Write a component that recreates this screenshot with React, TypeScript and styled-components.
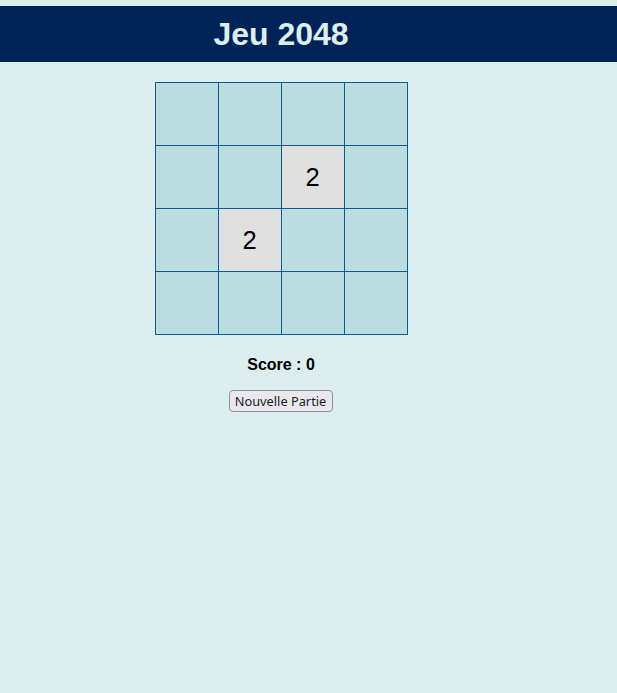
import React from "react";
import styled, { createGlobalStyle } from "styled-components";

const GlobalStyle = createGlobalStyle`
  html, body {
    margin: 0;
    padding: 0;
    background: #ddeeee;
  }
  body {
    font-family: "Liberation Sans", Arial, sans-serif;
    color: #000;
  }
`;

const Page = styled.div`
  min-height: 693px;
  padding-top: 6px;
  box-sizing: border-box;
  background: #ddeeee;
`;

const Header = styled.header`
  background: #002357;
  height: 56px;
  display: flex;
  align-items: center;
`;

const Title = styled.h1`
  margin: 0;
  width: 562px;
  text-align: center;
  font-size: 32px;
  font-weight: bold;
  color: #ddeeee;
  line-height: 37px;
`;

const Main = styled.main`
  width: 562px;
  display: flex;
  flex-direction: column;
  align-items: center;
  padding-top: 20px;
`;

const Board = styled.div`
  display: grid;
  grid-template-columns: repeat(4, 62px);
  grid-auto-rows: 62px;
  gap: 1px;
  padding: 1px;
  background: #0a5a96;
  margin-left: 1px;
`;

const Cell = styled.div<{ $filled: boolean }>`
  background: ${(p) => (p.$filled ? "#e0e0e0" : "#bbdddf")};
  display: flex;
  align-items: center;
  justify-content: center;
  padding-right: 1px;
  font-size: 25.6px;
  color: #000;
`;

const Score = styled.p`
  margin: 21px 0 16px;
  font-size: 16px;
  font-weight: bold;
  line-height: 18.4px;
`;

const NewGameButton = styled.button`
  font-family: "Noto Sans", "Open Sans", sans-serif;
  font-size: 12.8px;
  color: #1b1b2b;
  background: #e9e9ed;
  border: 1px solid #8f8f9d;
  border-radius: 4px;
  height: 22px;
  width: 104px;
  padding: 0;
  margin-right: 1px;
  line-height: 20px;
  cursor: pointer;
`;

const board: (number | null)[] = [
  null, null, null, null,
  null, null, 2, null,
  null, 2, null, null,
  null, null, null, null,
];

export default function App() {
  return (
    <>
      <GlobalStyle />
      <Page>
        <Header>
          <Title>Jeu 2048</Title>
        </Header>
        <Main>
          <Board>
            {board.map((v, i) => (
              <Cell key={i} $filled={v !== null}>
                {v ?? ""}
              </Cell>
            ))}
          </Board>
          <Score>Score : 0</Score>
          <NewGameButton>Nouvelle Partie</NewGameButton>
        </Main>
      </Page>
    </>
  );
}
